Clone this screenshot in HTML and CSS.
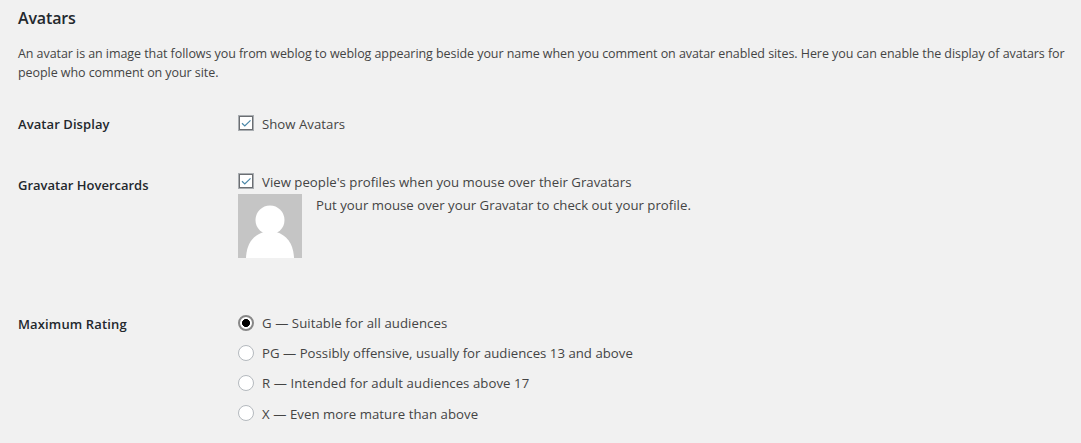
FILE: index.html
```html
<!DOCTYPE html>
<html lang="en">
<head>
<meta charset="utf-8">
<title>Avatars</title>
<link rel="stylesheet" href="styles.css">
</head>
<body>
<main class="settings">
  <h2 class="title">Avatars</h2>
  <p class="intro"><span class="intro-first">An avatar is an image that follows you from weblog to weblog appearing beside your name when you comment on avatar enabled sites. Here you can enable the display of avatars for</span><br><span class="intro-second">people who comment on your site.</span></p>
  <section class="row row-display">
    <h3 class="heading display-heading">Avatar Display</h3>
    <div class="field">
      <label class="option"><svg class="check" viewBox="0 0 16 16"><rect x=".5" y=".5" width="15" height="15" fill="#fff" stroke="#a9adb1"/><rect x="1.500" y="1.500" width="13" height="13" fill="#fff" stroke="#6b6e72"/><path d="M4 8.300 6.800 11 12.500 5.300" fill="none" stroke="#4a87a8" stroke-width="1.200"/></svg><span class="t-show">Show Avatars</span></label>
    </div>
  </section>
  <section class="row row-hover">
    <h3 class="heading hover-heading">Gravatar Hovercards</h3>
    <div class="field">
      <label class="option"><svg class="check" viewBox="0 0 16 16"><rect x=".5" y=".5" width="15" height="15" fill="#fff" stroke="#a9adb1"/><rect x="1.500" y="1.500" width="13" height="13" fill="#fff" stroke="#6b6e72"/><path d="M4 8.300 6.800 11 12.500 5.300" fill="none" stroke="#4a87a8" stroke-width="1.200"/></svg><span class="t-view">View people's profiles when you mouse over their Gravatars</span></label>
      <div class="profile">
        <svg class="avatar" viewBox="0 0 64 64"><path fill="#c5c5c5" d="M0 0h64v64H0z"/><circle cx="32" cy="26" r="14.500" fill="#fff"/><path d="M8 64C8.500 50 15 41 26 38H38C49 41 55.500 50 56 64z" fill="#fff"/></svg>
        <span class="t-put">Put your mouse over your Gravatar to check out your profile.</span>
      </div>
    </div>
  </section>
  <section class="row row-rating">
    <h3 class="heading rating-heading">Maximum Rating</h3>
    <div class="field ratings">
      <label class="option"><span class="radio selected"></span><span class="t-g">G — Suitable for all audiences</span></label>
      <label class="option"><span class="radio"></span><span class="t-pg">PG — Possibly offensive, usually for audiences 13 and above</span></label>
      <label class="option"><span class="radio"></span><span class="t-r">R — Intended for adult audiences above 17</span></label>
      <label class="option"><span class="radio"></span><span class="t-x">X — Even more mature than above</span></label>
    </div>
  </section>
</main>
</body>
</html>
```
FILE: styles.css
```css
* { box-sizing: border-box; }
body {
  margin: 0;
  height: 443px;
  overflow: hidden;
  background: #f1f1f1;
  color: #444;
  font: 13px/19px "Segoe UI", "Open Sans", "Noto Sans", sans-serif;
}
.settings { padding: 8px 0 0 18px; white-space: nowrap; }
.title { margin: 0; font-size: 16px; line-height: 20px; font-weight: 600; letter-spacing: -0.150px; color: #23282d; }
.intro { margin: 16px 0 0; font-size: 12.500px; letter-spacing: -0.067px; }
.row { display: flex; }
.row-display { margin-top: 32px; height: 60px; }
.row-hover { height: 139px; }
.heading { margin: 0; width: 220px; font-size: 13px; line-height: 20px; font-weight: 600; color: #23282d; }
.display-heading { letter-spacing: 0.080px; }
.hover-heading { padding-top: 1px; }
.rating-heading { padding-top: 1px; letter-spacing: 0.140px; }
.field { font-size: 13.200px; }
.option { display: flex; gap: 8px; height: 20px; line-height: 20px; }
.check { width: 16px; height: 16px; margin-top: 1px; }
.row-hover .option { margin-top: -2px; }
.profile { display: flex; gap: 14px; padding-top: 2px; }
.avatar { width: 64px; height: 64px; }
.t-put { padding-top: 2px; letter-spacing: 0.020px; }
.ratings { display: grid; grid-auto-rows: 20px; row-gap: 10px; }
.t-g, .t-r { letter-spacing: 0.060px; }
.t-x { padding-top: 1px; letter-spacing: 0.060px; }
.t-show, .t-view, .t-pg { letter-spacing: 0.020px; }
.radio {
  width: 16px;
  height: 16px;
  margin-top: 2px;
  border: 1px solid #b4b9be;
  border-radius: 50%;
  background: #fff;
}
.selected { border: 2px solid #888; background: radial-gradient(circle, #000 0 3.700px, #fff 4.300px); }
```
